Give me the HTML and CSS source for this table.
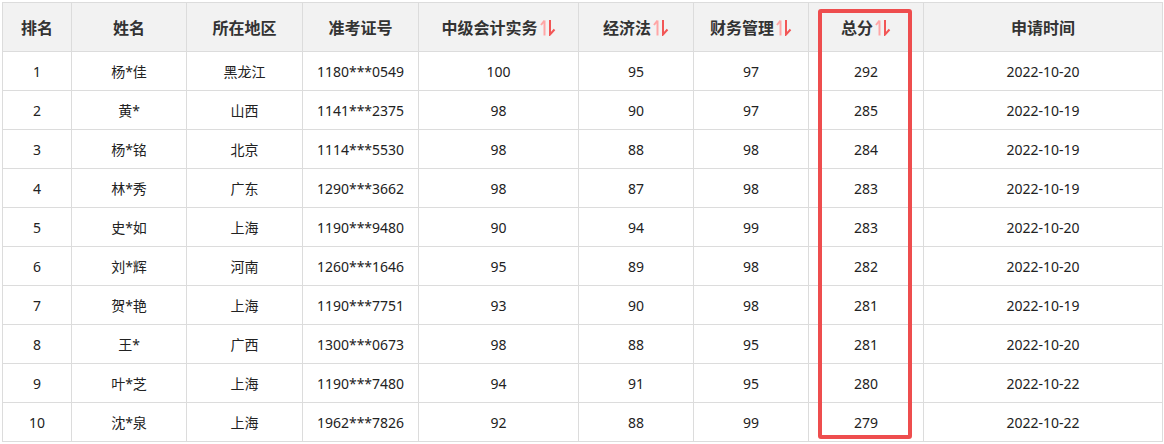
FILE: index.html
```html
<!DOCTYPE html>
<html lang="zh">
<head>
<meta charset="utf-8">
<link rel="stylesheet" href="styles.css">
</head>
<body>
<div class="wrap">
<table class="rank">
<colgroup>
<col class="c-rank"><col class="c-name"><col class="c-area"><col class="c-id"><col class="c-acc"><col class="c-law"><col class="c-fin"><col class="c-total"><col class="c-date">
</colgroup>
<thead>
<tr>
<th>排名</th><th>姓名</th><th>所在地区</th><th>准考证号</th>
<th><span class="sortable">中级会计实务<svg class="sort" viewBox="0 0 16 17"><path class="up" d="M4.5 1.5V16.5M4.5 1.5L1 6"/><path class="down" d="M10 1V15.5L14.5 10.5"/></svg></span></th>
<th><span class="sortable">经济法<svg class="sort" viewBox="0 0 16 17"><path class="up" d="M4.5 1.5V16.5M4.5 1.5L1 6"/><path class="down" d="M10 1V15.5L14.5 10.5"/></svg></span></th>
<th><span class="sortable">财务管理<svg class="sort" viewBox="0 0 16 17"><path class="up" d="M4.5 1.5V16.5M4.5 1.5L1 6"/><path class="down" d="M10 1V15.5L14.5 10.5"/></svg></span></th>
<th><span class="sortable">总分<svg class="sort" viewBox="0 0 16 17"><path class="up" d="M4.5 1.5V16.5M4.5 1.5L1 6"/><path class="down" d="M10 1V15.5L14.5 10.5"/></svg></span></th>
<th>申请时间</th>
</tr>
</thead>
<tbody>
<tr><td>1</td><td>杨*佳</td><td>黑龙江</td><td>1180***0549</td><td>100</td><td>95</td><td>97</td><td>292</td><td>2022-10-20</td></tr>
<tr><td>2</td><td>黄*</td><td>山西</td><td>1141***2375</td><td>98</td><td>90</td><td>97</td><td>285</td><td>2022-10-19</td></tr>
<tr><td>3</td><td>杨*铭</td><td>北京</td><td>1114***5530</td><td>98</td><td>88</td><td>98</td><td>284</td><td>2022-10-19</td></tr>
<tr><td>4</td><td>林*秀</td><td>广东</td><td>1290***3662</td><td>98</td><td>87</td><td>98</td><td>283</td><td>2022-10-19</td></tr>
<tr><td>5</td><td>史*如</td><td>上海</td><td>1190***9480</td><td>90</td><td>94</td><td>99</td><td>283</td><td>2022-10-20</td></tr>
<tr><td>6</td><td>刘*辉</td><td>河南</td><td>1260***1646</td><td>95</td><td>89</td><td>98</td><td>282</td><td>2022-10-20</td></tr>
<tr><td>7</td><td>贺*艳</td><td>上海</td><td>1190***7751</td><td>93</td><td>90</td><td>98</td><td>281</td><td>2022-10-19</td></tr>
<tr><td>8</td><td>王*</td><td>广西</td><td>1300***0673</td><td>98</td><td>88</td><td>95</td><td>281</td><td>2022-10-20</td></tr>
<tr><td>9</td><td>叶*芝</td><td>上海</td><td>1190***7480</td><td>94</td><td>91</td><td>95</td><td>280</td><td>2022-10-22</td></tr>
<tr><td>10</td><td>沈*泉</td><td>上海</td><td>1962***7826</td><td>92</td><td>88</td><td>99</td><td>279</td><td>2022-10-22</td></tr>
</tbody>
</table>
<div class="highlight"></div>
</div>
</body>
</html>
```
FILE: styles.css
```css
html, body {
  margin: 0;
  padding: 0;
  background: #fff;
}
body {
  padding: 2px;
  font-family: "Noto Sans", "Noto Sans CJK SC", sans-serif;
  color: #222;
}
.wrap {
  position: relative;
  width: 1160px;
}
.rank {
  border-collapse: collapse;
  table-layout: fixed;
  width: 1160px;
}
.c-rank { width: 69px; }
.c-name { width: 115px; }
.c-area { width: 116px; }
.c-id { width: 116px; }
.c-acc { width: 160px; }
.c-law { width: 115px; }
.c-fin { width: 115px; }
.c-total { width: 115px; }
.c-date { width: 239px; }
.rank th, .rank td {
  border: 1px solid #dcdcdc;
  text-align: center;
  padding: 0;
}
.rank th {
  height: 48px;
  background: #f2f2f2;
  font-size: 16px;
  font-weight: 700;
  color: #333;
  font-family: "Noto Sans CJK SC", sans-serif;
}
.rank td {
  height: 38px;
  font-size: 14px;
  color: #222;
}
.sortable {
  display: inline-flex;
  align-items: center;
  gap: 2px;
}
.sort {
  width: 16px;
  height: 17px;
  fill: none;
  stroke-width: 2;
}
.sort .up { stroke: #ffa6a6; }
.sort .down { stroke: #f25656; }
.highlight {
  position: absolute;
  left: 816px;
  top: 7px;
  width: 86px;
  height: 422px;
  border: 4px solid #ee4d4e;
  border-radius: 3px;
}
```
